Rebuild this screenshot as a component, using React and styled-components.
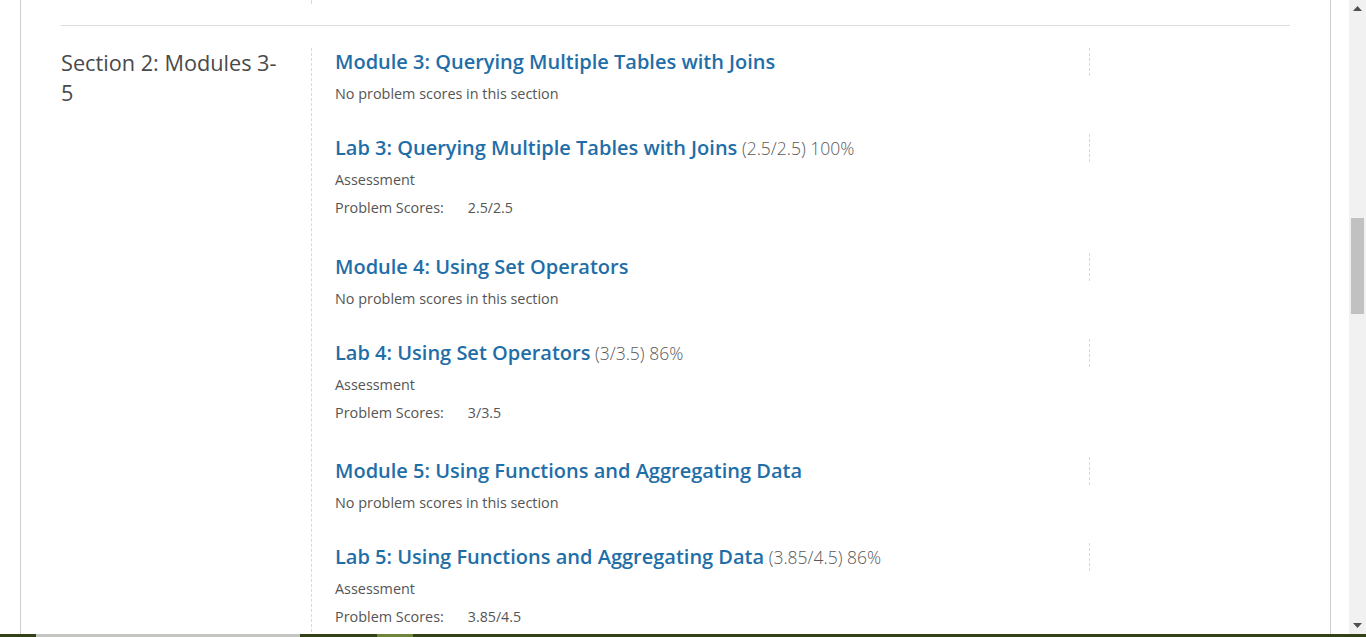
import React from "react";
import styled, { createGlobalStyle } from "styled-components";

const GlobalStyle = createGlobalStyle`
	html, body {
		margin: 0;
		padding: 0;
		overflow: hidden;
		background: #fff;
	}
	body {
		font-family: "Open Sans", "Noto Sans", sans-serif;
	}
`;

const items = [
	{ title: "Module 3: Querying Multiple Tables with Joins" },
	{ title: "Lab 3: Querying Multiple Tables with Joins", score: "(2.5/2.5) 100%", value: "2.5/2.5" },
	{ title: "Module 4: Using Set Operators" },
	{ title: "Lab 4: Using Set Operators", score: "(3/3.5) 86%", value: "3/3.5" },
	{ title: "Module 5: Using Functions and Aggregating Data" },
	{ title: "Lab 5: Using Functions and Aggregating Data", score: "(3.85/4.5) 86%", value: "3.85/4.5" },
];

const App = () => {
	return (
		<Screen>
			<GlobalStyle />
			<Top>
				<Viewport>
					<Page>
						<PrevTail>
							<Gutter />
							<TailLine />
						</PrevTail>
						<Rule />
						<Section>
							<SectionName>Section 2: Modules 3-5</SectionName>
							<Content>
								{items.map((item) => (
									<Item key={item.title} $lab={!!item.value}>
										<TitleRow>
											<Title href="#">{item.title}</Title>
											{item.score && <Score> {item.score}</Score>}
										</TitleRow>
										{item.value ? (
											<>
												<Label $top={7}>Assessment</Label>
												<ScoresRow>
													<Label $top={0}>Problem Scores:</Label>
													<Value>{item.value}</Value>
												</ScoresRow>
											</>
										) : (
											<Label $top={7}>No problem scores in this section</Label>
										)}
									</Item>
								))}
							</Content>
						</Section>
					</Page>
				</Viewport>
				<Scrollbar>
					<Arrow>
						<svg width="9" height="5" viewBox="0 0 9 5">
							<path d="M0 5 L4.5 0 L9 5 Z" fill="#505050" />
						</svg>
					</Arrow>
					<Track>
						<Thumb />
					</Track>
					<Arrow>
						<svg width="9" height="5" viewBox="0 0 9 5">
							<path d="M0 0 L9 0 L4.5 5 Z" fill="#505050" />
						</svg>
					</Arrow>
				</Scrollbar>
			</Top>
			<Taskbar>
				<Seg $w={36} $c="#34401a" />
				<Seg $w={264} $c="#c4c4c0" />
				<Seg $w={77} $c="#34401a" />
				<Seg $w={36} $c="#71853a" />
				<Seg $w={953} $c="#34401a" />
			</Taskbar>
		</Screen>
	);
};

export default App;

const Screen = styled.div`
	width: 1366px;
	height: 637px;
	display: flex;
	flex-direction: column;
	overflow: hidden;
`;

const Top = styled.div`
	display: flex;
	height: 634px;
	overflow: hidden;
`;

const Viewport = styled.div`
	width: 1349px;
	padding-left: 20px;
	box-sizing: border-box;
	overflow: hidden;
`;

const Page = styled.div`
	width: 1311px;
	height: 634px;
	box-sizing: border-box;
	border-left: 1px solid #cfcfcf;
	border-right: 1px solid #cfcfcf;
	padding: 0 40px;
`;

const PrevTail = styled.div`
	display: flex;
	height: 4px;
	margin-bottom: 21px;
`;

const Gutter = styled.div`
	width: 250px;
	flex-shrink: 0;
`;

const TailLine = styled.div`
	border-left: 1px dashed #d8d8d8;
`;

const Rule = styled.div`
	height: 1px;
	background: #dcdcdc;
`;

const Section = styled.div`
	display: flex;
	padding-top: 22px;
`;

const SectionName = styled.h2`
	width: 250px;
	flex-shrink: 0;
	box-sizing: border-box;
	margin: 0;
	padding-right: 30px;
	font-size: 21.7px;
	line-height: 30px;
	font-weight: 400;
	color: #4a4a4a;
`;

const Content = styled.div`
	flex: 1;
	border-left: 1px dashed #d8d8d8;
	padding-left: 23px;
	min-height: 600px;
`;

const Item = styled.div`
	padding-bottom: ${(p) => (p.$lab ? "30.5px" : "29px")};
`;

const TitleRow = styled.div`
	width: 754px;
	height: 28px;
	line-height: 28px;
	border-right: 1px dashed #d8d8d8;
	white-space: nowrap;
`;

const Title = styled.a`
	font-size: 20px;
	font-weight: 600;
	color: #1f6ea7;
	text-decoration: none;
`;

const Score = styled.span`
	font-size: 17.5px;
	font-weight: 300;
	color: #595959;
`;

const Label = styled.div`
	margin-top: ${(p) => p.$top}px;
	font-size: 14.4px;
	line-height: 22px;
	font-weight: 400;
	color: #555;
`;

const ScoresRow = styled.div`
	display: flex;
	margin-top: 6px;
	padding-bottom: 3px;
`;

const Value = styled.div`
	margin-left: 24px;
	font-size: 14.2px;
	line-height: 22px;
	color: #555;
`;

const Scrollbar = styled.div`
	width: 17px;
	background: #f1f1f1;
	display: flex;
	flex-direction: column;
`;

const Arrow = styled.div`
	height: 17px;
	display: flex;
	align-items: center;
	justify-content: center;
`;

const Track = styled.div`
	flex: 1;
	padding-top: 201px;
`;

const Thumb = styled.div`
	width: 13px;
	height: 96px;
	margin-left: 2px;
	background: #c1c1c1;
`;

const Taskbar = styled.div`
	height: 3px;
	display: flex;
`;

const Seg = styled.div`
	width: ${(p) => p.$w}px;
	background: ${(p) => p.$c};
`;
